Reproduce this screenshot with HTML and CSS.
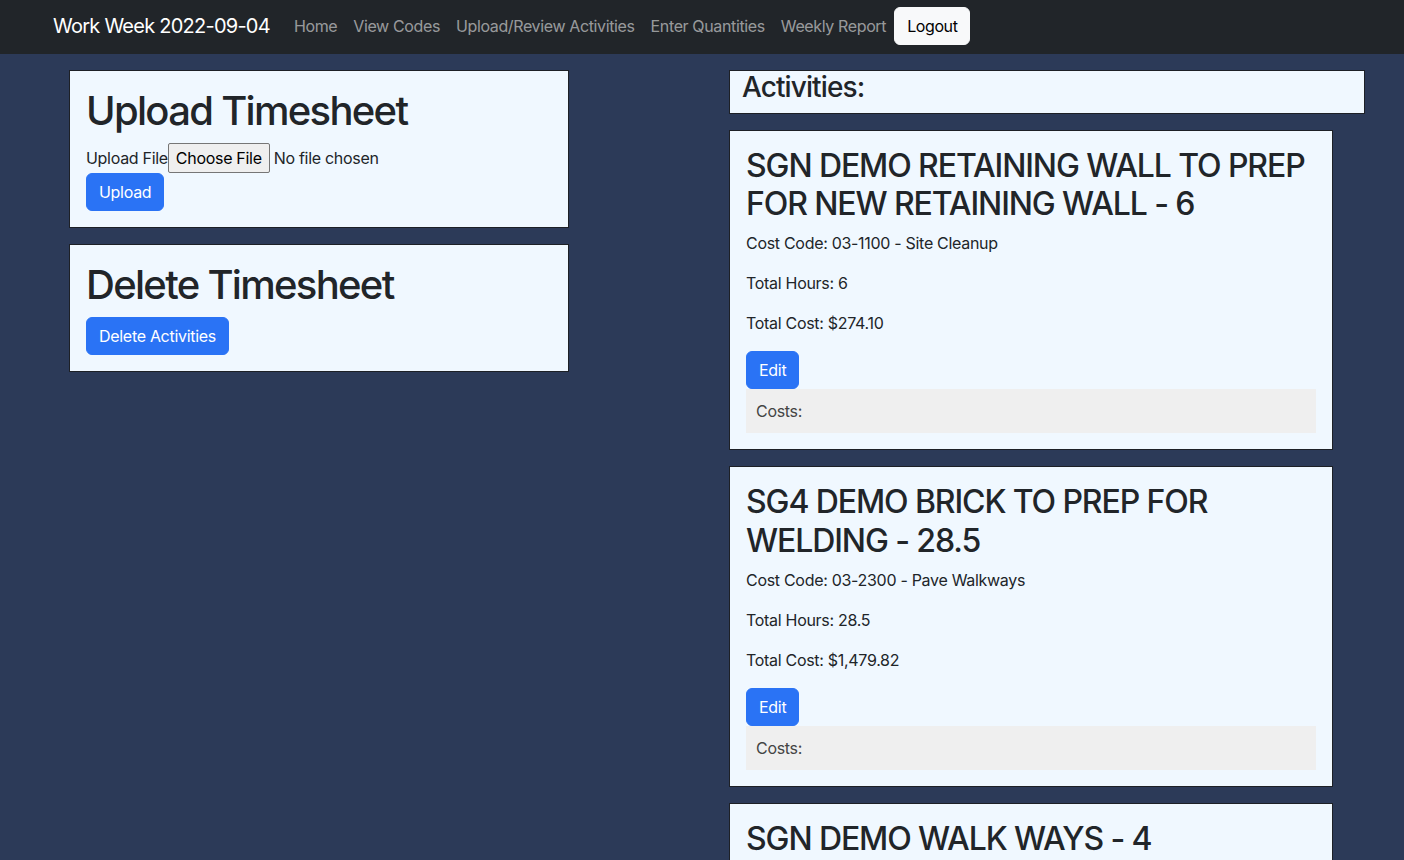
FILE: index.html
```html
<!DOCTYPE html>
<html lang="en">
<head>
<meta charset="utf-8">
<title>Work Week 2022-09-04</title>
<link rel="stylesheet" href="styles.css">
</head>
<body>
<nav class="navbar">
  <div class="nav-inner">
    <a class="brand" href="#">Work Week 2022-09-04</a>
    <ul class="nav-links">
      <li><a class="nav-link" href="#">Home</a></li>
      <li><a class="nav-link" href="#">View Codes</a></li>
      <li><a class="nav-link" href="#">Upload/Review Activities</a></li>
      <li><a class="nav-link" href="#">Enter Quantities</a></li>
      <li><a class="nav-link" href="#">Weekly Report</a></li>
      <li><a class="btn btn-light" href="#">Logout</a></li>
    </ul>
  </div>
</nav>
<main class="main">
  <div class="left-col">
    <section class="panel">
      <h1 class="title">Upload Timesheet</h1>
      <form class="upload-form">
        <div class="file-row"><label for="file">Upload File</label><input id="file" class="file-input" type="file"></div>
        <button type="button" class="btn btn-primary">Upload</button>
      </form>
    </section>
    <section class="panel">
      <h1 class="title">Delete Timesheet</h1>
      <button type="button" class="btn btn-primary">Delete Activities</button>
    </section>
  </div>
  <div class="right-col">
    <div class="activities-head"><h3>Activities:</h3></div>
    <div class="activity">
      <h2>SGN DEMO RETAINING WALL TO PREP FOR NEW RETAINING WALL - 6</h2>
      <p>Cost Code: 03-1100 - Site Cleanup</p>
      <p>Total Hours: 6</p>
      <p>Total Cost: $274.10</p>
      <button type="button" class="btn btn-primary">Edit</button>
      <div class="costs">Costs:</div>
    </div>
    <div class="activity">
      <h2>SG4 DEMO BRICK TO PREP FOR WELDING - 28.5</h2>
      <p>Cost Code: 03-2300 - Pave Walkways</p>
      <p>Total Hours: 28.5</p>
      <p>Total Cost: $1,479.82</p>
      <button type="button" class="btn btn-primary">Edit</button>
      <div class="costs">Costs:</div>
    </div>
    <div class="activity">
      <h2>SGN DEMO WALK WAYS - 4</h2>
      <p>Cost Code: 03-1100 - Site Cleanup</p>
      <p>Total Hours: 4</p>
      <p>Total Cost: $182.73</p>
      <button type="button" class="btn btn-primary">Edit</button>
      <div class="costs">Costs:</div>
    </div>
  </div>
</main>
</body>
</html>
```

FILE: styles.css
```css
* { box-sizing: border-box; }
html, body { margin: 0; padding: 0; }
body {
  font-family: Inter, Roboto, "Liberation Sans", sans-serif;
  font-size: 16px;
  line-height: 1.5;
  letter-spacing: -0.3px;
  color: #212529;
  background: #2c3a58;
}
a { text-decoration: none; }

.navbar {
  background: #212529;
  height: 54px;
}
.nav-inner {
  height: 54px;
  padding: 0 0 2px 53px;
  display: flex;
  align-items: center;
}
.brand {
  color: #fff;
  font-size: 20px;
  line-height: 30px;
  letter-spacing: -0.75px;
  margin-right: 16px;
}
.nav-links {
  list-style: none;
  margin: 0;
  padding: 0;
  display: flex;
  align-items: center;
}
.nav-link {
  display: block;
  padding: 8px;
  color: rgba(255,255,255,0.55);
  line-height: 24px;
  letter-spacing: -0.37px;
}

.btn {
  display: inline-block;
  font-family: inherit;
  font-size: 16px;
  line-height: 24px;
  letter-spacing: -0.3px;
  padding: 6px 12px;
  border: 1px solid transparent;
  border-radius: 6px;
  cursor: pointer;
}
.btn-primary {
  background: #2a73f5;
  border-color: #2a73f5;
  color: #fff;
}
.btn-light {
  background: #f8f9fa;
  border-color: #f8f9fa;
  color: #000;
  letter-spacing: -0.4px;
}

.main {
  display: flex;
  align-items: flex-start;
  padding: 16px 0 0 69px;
}
.left-col {
  width: 500px;
  flex: none;
}
.panel {
  background: #f0f8ff;
  border: 1px solid #1d2026;
  padding: 16px;
  margin-bottom: 16px;
}
.title {
  font-size: 40px;
  font-weight: 500;
  line-height: 1.2;
  letter-spacing: -1.7px;
  margin: 0 0 8px;
}
.upload-form { margin: 0; }
.file-row {
  display: flex;
  align-items: center;
  height: 30px;
}
.file-input {
  font-family: inherit;
  font-size: 16px;
  letter-spacing: -0.3px;
  color: #212529;
}
.file-input::file-selector-button {
  font-family: inherit;
  font-size: 16px;
  letter-spacing: -0.3px;
  height: 30px;
  padding: 0 7px;
  margin: 0 4px 0 0;
  background: #efefef;
  border: 1px solid #767676;
  border-radius: 2px;
  color: #000;
}

.right-col {
  margin-left: 160px;
  width: 636px;
  flex: none;
}
.activities-head {
  background: #f0f8ff;
  border: 1px solid #1d2026;
  padding: 0 12px;
  margin-bottom: 16px;
}
.activities-head h3 {
  margin: 0 0 8px;
  font-size: 28px;
  font-weight: 500;
  line-height: 1.2;
  letter-spacing: -0.9px;
}
.activity {
  width: 95%;
  background: #f0f8ff;
  border: 1px solid #1d2026;
  padding: 16px;
  margin-bottom: 16px;
}
.activity h2 {
  margin: 0 0 8px;
  font-size: 32px;
  font-weight: 500;
  line-height: 1.2;
  letter-spacing: -1.1px;
}
.activity p {
  margin: 0 0 16px;
}
.costs {
  background: #efefef;
  color: #444;
  padding: 10px;
}
```
